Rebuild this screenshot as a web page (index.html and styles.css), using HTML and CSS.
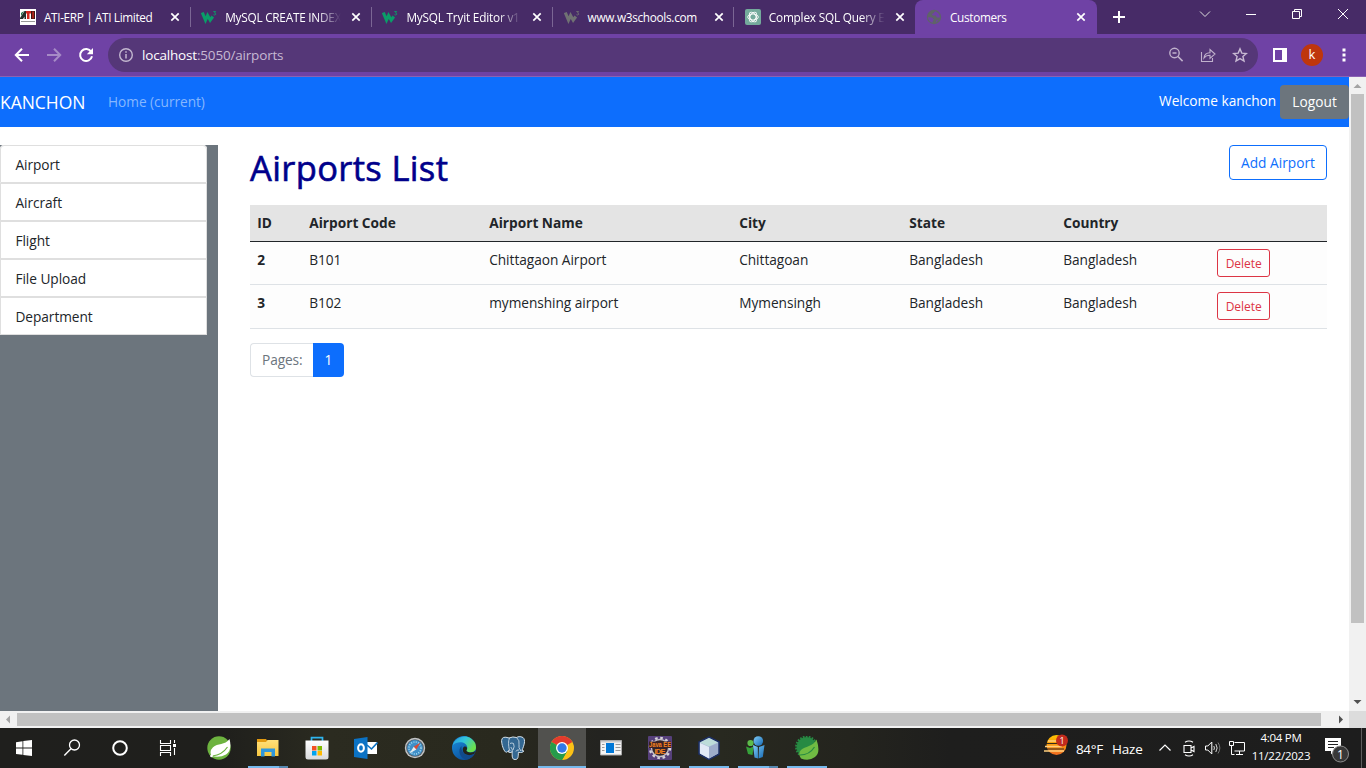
FILE: index.html
```html
<!DOCTYPE html>
<html lang="en">
<head>
<meta charset="utf-8">
<title>Customers</title>
<link rel="stylesheet" href="styles.css">
</head>
<body>
<svg width="0" height="0" class="defs">
  <defs>
    <symbol id="x" viewBox="0 0 10 10"><path d="M1.3 1.3l7.4 7.4M8.7 1.3L1.3 8.7" stroke="#fff" stroke-width="1.7" fill="none"/></symbol>
    <symbol id="w3" viewBox="0 0 16 16"><path d="M1.300 3.500L4.500 11.200 6.600 6.500 9.200 11.200 11.800 7.500" fill="none" stroke="currentColor" stroke-width="3.100"/><path d="M12.300 2.500h2.300l-1.100 1.500q1.500.1 1.200 1.400-.7 1-2.200.3" fill="none" stroke="currentColor" stroke-width=".9"/></symbol>
    <linearGradient id="edgeTop" x1="0" y1="0" x2="1" y2=".5"><stop offset="0" stop-color="#2697df"/><stop offset=".5" stop-color="#32c5dc"/><stop offset="1" stop-color="#6be04e"/></linearGradient>
    <linearGradient id="edgeBot" x1="0" y1="0" x2=".6" y2="1"><stop offset="0" stop-color="#1b8fdf"/><stop offset="1" stop-color="#0c4f9b"/></linearGradient>
    <linearGradient id="sun" x1="0" y1="0" x2="0" y2="1"><stop offset="0" stop-color="#ffc400"/><stop offset="1" stop-color="#f06a21"/></linearGradient>
    <linearGradient id="folder" x1="0" y1="0" x2="0" y2="1"><stop offset="0" stop-color="#ffe07a"/><stop offset="1" stop-color="#f8c740"/></linearGradient>
    <linearGradient id="bag" x1="0" y1="0" x2="0" y2="1"><stop offset="0" stop-color="#fff"/><stop offset="1" stop-color="#d9dadc"/></linearGradient>
    <linearGradient id="person" x1="0" y1="0" x2="1" y2="1"><stop offset="0" stop-color="#7fcdf9"/><stop offset="1" stop-color="#1769b3"/></linearGradient>
  </defs>
</svg>

<div class="tabs">
  <div class="tab">
    <svg class="fav" viewBox="0 0 16 16"><path d="M0 0h16v16H0z" fill="#fff"/><path d="M0 9l4.500-7H6v8H4.500V7.500L3 10H0z" fill="#22302a"/><path d="M1 4l3-2-3 5z" fill="#217346"/><path d="M6 2h5v2.500H9.500V10H7V4.500H6z" fill="#d1281e"/><path d="M11 2h4v8h-4z" fill="#3a1513"/><path d="M12.300 2.500h1.500v7h-1.500z" fill="#c8281e"/><path d="M1 12.500h14" stroke="#999"/></svg>
    <span class="tab-title t1">ATI-ERP | ATI Limited</span><svg class="close"><use href="#x"/></svg>
  </div>
  <div class="tab">
    <svg class="fav green"><use href="#w3"/></svg>
    <span class="tab-title fade t2">MySQL CREATE INDEX</span><svg class="close"><use href="#x"/></svg>
  </div>
  <div class="tab">
    <svg class="fav green"><use href="#w3"/></svg>
    <span class="tab-title fade t3">MySQL Tryit Editor v1</span><svg class="close"><use href="#x"/></svg>
  </div>
  <div class="tab">
    <svg class="fav grey"><use href="#w3"/></svg>
    <span class="tab-title t4">www.w3schools.com</span><svg class="close"><use href="#x"/></svg>
  </div>
  <div class="tab last">
    <svg class="fav" viewBox="0 0 16 16"><rect width="16" height="16" rx="2" fill="#74aa9c"/><g fill="none" stroke="#fff" stroke-width=".9"><ellipse cx="8" cy="8" rx="5.300" ry="3"/><ellipse cx="8" cy="8" rx="5.300" ry="3" transform="rotate(60 8 8)"/><ellipse cx="8" cy="8" rx="5.300" ry="3" transform="rotate(120 8 8)"/></g></svg>
    <span class="tab-title fade t5">Complex SQL Query E</span><svg class="close"><use href="#x"/></svg>
  </div>
  <div class="tab active">
    <svg class="fav" viewBox="0 0 16 16"><circle cx="8" cy="8" r="7.200" fill="#5f6368"/><path d="M2 8.300l4 .2 2 2.200-1.300 1.300v1.800Q2.300 12.500 2 8.300zM9 2.200L7.600 4.200 5.800 5l1 1.600h3l1 2h3.100Q14 3.800 9 2.200zM10 11.500l2.500-.6-2.300 2.500z" fill="#6f42a5"/></svg>
    <span class="tab-title t6">Customers</span><svg class="close"><use href="#x"/></svg>
  </div>
  <svg class="plus" viewBox="0 0 14 14"><path d="M7 1v12M1 7h12" stroke="#fff" stroke-width="2"/></svg>
  <div class="winctl">
    <svg viewBox="0 0 12 12"><path d="M1 3.500l5 5 5-5" fill="none" stroke="#ddd"/></svg>
    <svg viewBox="0 0 12 12"><path d="M1 6.500h10" stroke="#fff"/></svg>
    <svg viewBox="0 0 12 12"><path d="M1.500 3.500h7v7h-7zM3.500 3.500v-2h7v7h-2" fill="none" stroke="#fff"/></svg>
    <svg viewBox="0 0 12 12"><path d="M1 1l10 10M11 1L1 11" stroke="#fff" fill="none"/></svg>
  </div>
</div>

<div class="toolbar">
  <svg class="nav" viewBox="0 0 16 16"><path d="M15 8H2.500M8 1.800L1.800 8 8 14.200" fill="none" stroke="#fff" stroke-width="2"/></svg>
  <svg class="nav" viewBox="0 0 16 16"><path d="M1 8h12.500M8 1.800L14.200 8 8 14.200" fill="none" stroke="#a68bc6" stroke-width="2"/></svg>
  <svg class="nav" viewBox="0 0 16 16"><path d="M13.200 4.800A6 6 0 1 0 14 9.300" fill="none" stroke="#fff" stroke-width="2"/><path d="M15 1v6.200H8.800z" fill="#fff"/></svg>
  <div class="omnibox">
    <svg class="info" viewBox="0 0 16 16"><circle cx="8" cy="8" r="6.300" fill="none" stroke="#c3b7cf" stroke-width="1.400"/><path d="M8 7v4.500M8 4.200v1.600" stroke="#c3b7cf" stroke-width="1.500"/></svg>
    <span class="url"><b>localhost</b>:5050/airports</span>
    <svg class="act" viewBox="0 0 16 16"><circle cx="6.500" cy="6" r="4.700" fill="none" stroke="#c0b1cc" stroke-width="1.400"/><path d="M10 9.500l4.600 4.600M4.500 6h4" stroke="#c0b1cc" stroke-width="1.600"/></svg>
    <svg class="act" viewBox="0 0 16 16"><path d="M1.500 5v9.500h11V11M4 11q.5-5 6-5.200V2.500L15 7l-5 4.300V8.300Q6 8.300 4 11z" fill="none" stroke="#c0b1cc" stroke-width="1.100"/></svg>
    <svg class="act" viewBox="0 0 16 16"><path d="M8 1.900l1.800 4.200 4.600.4-3.500 3 1.100 4.500L8 11.600 4 14l1.100-4.500-3.500-3 4.600-.4z" fill="none" stroke="#c8bad3" stroke-width="1.400"/></svg>
  </div>
  <svg class="panel" viewBox="0 0 14 14"><path d="M1 1h12v12H1z" fill="none" stroke="#fff" stroke-width="2"/><path d="M9 1h4v12H9z" fill="#fff"/></svg>
  <span class="avatar">k</span>
  <svg class="dots" viewBox="0 0 4 14"><path d="M.5 .5h3v3h-3zM.5 5.500h3v3h-3zM.5 10.500h3v3h-3z" fill="#fff"/></svg>
</div>

<div class="content">
  <div class="page">
    <nav class="navbar">
      <span class="brand">KANCHON</span>
      <span class="home">Home (current)</span>
      <span class="welcome">Welcome kanchon</span>
      <span class="logout">Logout</span>
    </nav>
    <div class="columns">
      <aside class="sidebar">
        <ul class="menu">
          <li>Airport</li><li>Aircraft</li><li>Flight</li><li>File Upload</li><li>Department</li>
        </ul>
      </aside>
      <main class="main">
        <div class="heading"><h1>Airports List</h1><span class="add">Add Airport</span></div>
        <table>
          <colgroup><col class="c1"><col class="c2"><col class="c3"><col class="c4"><col class="c5"><col class="c6"><col class="c7"></colgroup>
          <thead><tr><th>ID</th><th>Airport Code</th><th>Airport Name</th><th>City</th><th>State</th><th>Country</th><th></th></tr></thead>
          <tbody>
            <tr><th>2</th><td>B101</td><td>Chittagaon Airport</td><td>Chittagoan</td><td>Bangladesh</td><td>Bangladesh</td><td><span class="delete">Delete</span></td></tr>
            <tr><th>3</th><td>B102</td><td>mymenshing airport</td><td>Mymensingh</td><td>Bangladesh</td><td>Bangladesh</td><td><span class="delete">Delete</span></td></tr>
          </tbody>
        </table>
        <div class="pager"><span class="pages">Pages:</span><span class="current">1</span></div>
      </main>
    </div>
  </div>
  <div class="vscroll">
    <svg viewBox="0 0 17 17"><path d="M4.500 11h8L8.500 7z" fill="#a3a3a3"/></svg>
    <div class="vthumb"></div>
    <svg viewBox="0 0 17 17"><path d="M4.500 6h8l-4 4z" fill="#505050"/></svg>
  </div>
</div>
<div class="hscroll">
  <svg viewBox="0 0 17 17"><path d="M10 4.500v8L6 8.500z" fill="#a3a3a3"/></svg>
  <div class="hthumb"></div>
  <svg viewBox="0 0 17 17"><path d="M7 4.500v8l4-4z" fill="#505050"/></svg>
  <div class="corner"></div>
</div>

<div class="taskbar">
  <div class="sys"><svg viewBox="0 0 24 24"><path d="M4 6.300l6.500-1v6.300H4zM11.300 5.100L20 4v7.600h-8.700zM4 12.400h6.500v6.400L4 17.900zM11.300 12.400H20V20l-8.700-1.100z" fill="#fff"/></svg></div>
  <div class="sys"><svg viewBox="0 0 24 24"><circle cx="14.500" cy="9" r="5" fill="none" stroke="#fff" stroke-width="1.300"/><path d="M11 12.700L4.300 19.600" stroke="#fff" stroke-width="1.400"/></svg></div>
  <div class="sys"><svg viewBox="0 0 24 24"><circle cx="12" cy="12" r="6.800" fill="none" stroke="#fff" stroke-width="2"/></svg></div>
  <div class="sys"><svg viewBox="0 0 24 24"><path d="M4.500 4v3.500h10V4M4.500 20v-3.500h10V20M4.500 9.500h10v5h-10zM18.500 4v3M18.500 12v7" fill="none" stroke="#fff" stroke-width="1.100"/><path d="M17 8h3v3h-3z" fill="#fff"/></svg></div>
  <div class="apps">
    <div class="app"><svg viewBox="0 0 24 24"><circle cx="12" cy="12" r="11.700" fill="#6db33f"/><path d="M22.500 3Q25.500 14 19 18.500q-6 3.500-14.500 1.600Q2 15 6 11.200C10.500 7 18 9.500 22.500 3z" fill="#fff"/><path d="M5.500 20Q15 19 20.500 11" stroke="#6db33f" stroke-width="1.200" fill="none"/><circle cx="4.500" cy="20" r="1.300" fill="#fff"/></svg></div>
    <div class="app open split"><svg viewBox="0 0 24 24"><path d="M1 3h9l1.500 2H22v15H1z" fill="#e29a10"/><path d="M1 6h9l1.500-2H22.500v16H1z" fill="url(#folder)"/><path d="M5 20.500v-8h14v8h-3.500V16h-7v4.500z" fill="#2f97dc"/></svg></div>
    <div class="app"><svg viewBox="0 0 24 24"><path d="M6.500 5V1.700h11V5" fill="none" stroke="#2fb5ee" stroke-width="1.700"/><path d="M.5 4.500h23V21q0 2.500-2.500 2.500H3Q.5 23.500.5 21z" fill="url(#bag)"/><path d="M7 10h4.500v4.500H7z" fill="#f25022"/><path d="M12.500 10H17v4.500h-4.500z" fill="#7fba00"/><path d="M7 15h4.500v4.500H7z" fill="#00a4ef"/><path d="M12.500 15H17v4.500h-4.500z" fill="#ffb900"/></svg></div>
    <div class="app"><svg viewBox="0 0 24 24"><path d="M12 6h11v12H12z" fill="#fff"/><path d="M13 9l4.500 4 6-6.500" stroke="#0b72c4" stroke-width="1.600" fill="none"/><path d="M0 3l13.500-2v22L0 21z" fill="#0b72c4"/><ellipse cx="7" cy="12" rx="2.900" ry="3.700" fill="none" stroke="#fff" stroke-width="2"/></svg></div>
    <div class="app"><svg viewBox="0 0 24 24"><circle cx="12" cy="12" r="10.200" fill="#c2c4c5"/><circle cx="12" cy="12" r="8.800" fill="#555f67"/><circle cx="12" cy="12" r="7.900" fill="#3f8fc8"/><circle cx="12" cy="12" r="6" fill="none" stroke="#a3d7ec" stroke-width="1.600" stroke-dasharray="1 1.360"/><path d="M17.500 6.500l-4.200 7-2.600-2.800z" fill="#d94b35"/><path d="M6.500 17.500l4.200-6.800 2.600 2.800z" fill="#e7edf0"/></svg></div>
    <div class="app"><svg viewBox="0 0 24 24"><circle cx="12" cy="12" r="12" fill="url(#edgeBot)"/><path d="M.5 9.500C3 2 12-2 19 2.500q5 3.500 5 9c0 5-6.500 6-9.500 3.800-1-.8.800-1.300.8-3.300C15.300 5.500 5 4.500.5 9.500z" fill="url(#edgeTop)"/><path d="M9.500 10C5 14 8 23.500 15 23.500q5-1.500 7.500-5.500-5 2.500-9 .5-4.500-2.500-4-8.500z" fill="#114a8b"/><path d="M12.500 10.500c2.500-.3 3.300 2 2 3.800q-.5 1.500 3 2.100 3.500.3 5.700-1.200l-1 2.600q-5 2.500-9 .3c-3-2-3.200-6.500-.7-7.600z" fill="#22231b"/></svg></div>
    <div class="app"><svg viewBox="0 0 24 24"><path d="M8 2Q1-.5 .6 4.500c0 4 2 10 4 11.500 1.500.8 2.500-1 3.500-2.200l1 .5q-1 1.400-2 1.400 2 1.700 4 .2c.2 4-.5 7.600 3 7.600s3-3 3.300-7.200c3 .6 4.500 0 5.500-1.300l-2-.5C23 9.500 25 4 22 1.500 19 0 17 .7 15.500 1.500Q12 .2 8 2z" fill="#336791" stroke="#d7e3ec" stroke-width="1"/><path d="M8.500 2C7 5 7.500 10 8.300 13.700M15.500 1.500q3.500 3 2.500 7-.8 3 1.800 6.500M11.300 16q.5-3-1.500-5M15 15.500q.5-2 3-1.500M9 7.500q2-1 3.500 0 1.500 3-.5 6.500" fill="none" stroke="#d7e3ec" stroke-width=".8"/></svg></div>
    <div class="app chrome open"><svg viewBox="0 0 24 24"><circle cx="12" cy="12" r="12" fill="#fbc116"/><path d="M12 12L1.600 6A12 12 0 0 1 22.400 6z" fill="#e33b2e"/><path d="M1.600 6A12 12 0 0 0 12 24l5.200-9L12 12z" fill="#269b4b"/><path d="M17.200 15L12 24l-2.500-6z" fill="#269b4b"/><circle cx="12" cy="12" r="6" fill="#fff"/><circle cx="12" cy="12" r="4.700" fill="#3379e8"/></svg></div>
    <div class="app"><svg viewBox="0 0 24 24"><path d="M1.500 4.500h21v14.500h-21z" fill="#f4f4f4" stroke="#aaa"/><path d="M2 5h20v1.500H2z" fill="#ccc"/><path d="M7 7h8v10H7z" fill="#0078d7"/><path d="M3 8.500h2.500M3 11.500h2.500M3 14.500h2.500M16.500 8.500h5M16.500 11.500h5M16.500 14.500h5" stroke="#999"/></svg></div>
    <div class="app open"><svg viewBox="0 0 24 24"><rect width="24" height="24" rx="1" fill="#56407b"/><circle cx="12" cy="12" r="10" fill="none" stroke="#d5d2d8" stroke-width="2.500" stroke-dasharray="2.600 2.630"/><circle cx="12" cy="12" r="8.500" fill="#30232b" stroke="#c5c1c8" stroke-width="1.300"/><path d="M1 5.500h22v6.500H1z" fill="#3a2226"/><text x="12" y="11.300" class="jee" textLength="22" lengthAdjust="spacingAndGlyphs">Java EE</text><text x="12" y="18" class="jee big" textLength="11">IDE</text></svg></div>
    <div class="app open"><svg viewBox="0 0 24 24"><path d="M12 1l10 5v12l-10 5.500L2 18V6z" fill="#a8b9d6" stroke="#1d2f65" stroke-width="1.500"/><path d="M12 2l9 4.500-9 4-9-4z" fill="#bddcd9"/><path d="M3 7l9 4v11.500L3 17.500z" fill="#e2e9f6"/><path d="M12 11l9-4v10.500l-9 5z" fill="#9daccb"/></svg></div>
    <div class="app open split"><svg viewBox="0 0 24 24"><circle cx="4.500" cy="7" r="3.100" fill="#5dbb4a"/><path d="M0 10.500l4 1.500 3.500-1.500L6.500 19 2 18z" fill="#36a13a"/><circle cx="12.300" cy="5" r="4.800" fill="url(#person)"/><path d="M7 9l4.800 2 .2 11.500-3.500-1zM18.500 9L13 11l-.5 11.500 4.300-1.500z" fill="url(#person)"/></svg></div>
    <div class="app open"><svg viewBox="0 0 24 24"><circle cx="11.500" cy="11" r="10" fill="#278a43"/><circle cx="11.500" cy="11" r="10.400" fill="none" stroke="#278a43" stroke-width="2" stroke-dasharray="1.700 1.300"/><path d="M21.500 3.500Q26 17 20 21q-6 4.500-14 1.500-3.500-5 0-8.500c4-4 12-3 15.500-10.500z" fill="#70bb43"/><path d="M5 19q9.500 0 14.500-8" fill="none" stroke="#278a43" stroke-width="1.200"/></svg></div>
  </div>
  <div class="tray">
    <svg class="weather" viewBox="0 0 24 24"><circle cx="12.500" cy="11" r="10" fill="url(#sun)"/><path d="M2 9.500h18M0 15h20" stroke="#1f1f1e" stroke-width=".9"/><path d="M4 7h10M1 12.500h17M0 17h20" stroke="#ffcf7d" stroke-width="1.600"/><circle cx="18" cy="6.500" r="6" fill="#c42b1c"/><text x="18" y="9.500" class="badge">1</text></svg>
    <span class="temp">84°F</span><span class="haze">Haze</span>
    <svg class="chev" viewBox="0 0 14 14"><path d="M1.500 9.500L7 4l5.500 5.500" fill="none" stroke="#fff" stroke-width="1.200"/></svg>
    <svg class="meet" viewBox="0 0 14 18"><path d="M2 6.500h7v7H2zM9 9l3-1.500v5L9 11M3 3.300q4-2.600 8 0M3 15.700q4 2.600 8 0" fill="none" stroke="#fff" stroke-width="1.100"/></svg>
    <svg class="snd" viewBox="0 0 18 16"><path d="M1.500 6h2.300l4-4v12l-4-4H1.500z" fill="none" stroke="#fff"/><path d="M9.800 6q1.300 2 0 4M11.800 4q2.700 4 0 8" fill="none" stroke="#ddd"/><path d="M14 2.500q3.700 5.500 0 11" fill="none" stroke="#777"/></svg>
    <svg class="net" viewBox="0 0 18 16"><path d="M6.500 2.500h10v8.500h-10M11.500 11v3M8 14.500h7M1.500 1.500h4v4h-4zM3.500 6v8.500h3" fill="none" stroke="#fff"/></svg>
    <div class="clock"><span class="time">4:04 PM</span><span class="date">11/22/2023</span></div>
    <svg class="note" viewBox="0 0 26 26"><path d="M1 1h16v13h-7l-3 3.500V14H1z" fill="#fff"/><path d="M4 4.500h10M4 7.500h10M4 10.500h6" stroke="#222"/><circle cx="16.500" cy="17" r="8" fill="#383838" stroke="#8d8d8d" stroke-width="1"/><text x="16.500" y="21.500" class="count">1</text></svg>
    <div class="peek"></div>
  </div>
</div>
</body>
</html>
```
FILE: styles.css
```css
* { box-sizing: border-box; }
body { margin: 0; width: 1366px; height: 768px; overflow: hidden; display: flex; flex-direction: column; font-family: "Open Sans", "Noto Sans", sans-serif; background: #fff; white-space: nowrap; }
svg { display: block; flex: none; }
.defs { position: absolute; }

/* tab strip */
.tabs { height: 34px; flex: none; background: #472b67; display: flex; align-items: center; padding-left: 9.500px; }
.tab { width: 181.2px; height: 34px; flex: none; display: flex; align-items: center; padding-left: 10.500px; background: linear-gradient(#7b6694, #7b6694) right center / 1px 20px no-repeat; }
.tab.last { background: none; }
.tab.active { background: #6f42a5; border-radius: 8px 8px 0 0; }
.fav { width: 16px; height: 16px; margin-right: 8px; }
.green { color: #0a9d68; }
.grey { color: #707173; }
.tab-title { color: #fff; font-size: 11.800px; width: 118px; margin-right: 8px; line-height: 20px; }
.t1 { letter-spacing: -.36px; }
.t2 { letter-spacing: -.24px; }
.t3 { letter-spacing: -.2px; }
.t4 { letter-spacing: -.3px; }
.t5 { letter-spacing: -.2px; }
.t6 { letter-spacing: -.32px; }
.fade { -webkit-mask-image: linear-gradient(90deg, #000 92px, transparent 116px); mask-image: linear-gradient(90deg, #000 92px, transparent 116px); }
.close { width: 10px; height: 10px; }
.plus { width: 14px; height: 14px; margin-left: 15.300px; }
.winctl { margin-left: 73px; display: flex; gap: 34px; height: 28px; align-items: center; align-self: flex-start; }
.winctl svg { width: 12px; height: 12px; }

/* toolbar */
.toolbar { height: 43px; flex: none; background: #6f42a5; border-bottom: 1px solid #8a62b3; display: flex; align-items: center; padding-left: 14px; }
.nav { width: 16px; height: 16px; margin-right: 16px; }
.omnibox { width: 1150px; height: 34px; border-radius: 17px; background: #553778; margin-left: -2px; display: flex; align-items: center; padding: 0 10px; gap: 16px; }
.info { width: 16px; height: 16px; }
.url { color: #c6b9d3; font-size: 13.500px; letter-spacing: -.18px; margin-left: -8px; flex: 1; }
.url b { font-weight: 400; color: #fff; }
.act { width: 16px; height: 16px; }
.panel { width: 14px; height: 14px; margin-left: 15px; }
.avatar { width: 22px; height: 22px; border-radius: 50%; background: #bf360c; color: #fff; font-size: 13px; line-height: 21px; text-align: center; margin-left: 14px; }
.dots { width: 4px; height: 14px; margin-left: 19px; }

/* page */
.content { height: 634px; flex: none; display: flex; }
.page { width: 1349px; height: 634px; display: flex; flex-direction: column; font-size: 13.700px; letter-spacing: -.04px; color: #212529; }
.navbar { height: 50px; flex: none; background: #0d6efd; display: flex; align-items: center; color: #fff; }
.brand { font-size: 17.500px; width: 108px; padding-bottom: 1px; }
.home { color: #86b7fe; padding-bottom: 1px; }
.welcome { margin-left: auto; width: 121px; padding-bottom: 3px; letter-spacing: 0; }
.logout { width: 69px; height: 34px; line-height: 34px; background: #6c757d; border-radius: 4px; text-align: center; letter-spacing: .05px; }
.columns { flex: 1; display: flex; padding-top: 18px; }
.sidebar { width: 218px; background: #6c757d; }
.menu { list-style: none; width: 207px; margin: 0; padding: 0; background: #fff; border-radius: 4px 4px 0 0; }
.menu li { height: 38px; border: 1px solid #dfdfdf; padding: 0 14.400px; line-height: 38px; }
.menu li:first-child { border-radius: 4px 4px 0 0; }
.main { width: 1077px; margin-left: 32px; }
.heading { display: flex; justify-content: space-between; height: 60px; }
h1 { margin: 0; font-size: 34.500px; font-weight: 500; letter-spacing: .35px; line-height: 46px; color: #00008b; -webkit-text-stroke: .6px #00008b; }
.add { width: 98px; height: 35px; border: 1px solid #0d6efd; border-radius: 4px; color: #0d6efd; line-height: 34px; text-align: center; letter-spacing: .03px; }
table { width: 1077px; table-layout: fixed; border-collapse: separate; border-spacing: 0; }
.c1 { width: 52px; } .c2 { width: 180px; } .c3 { width: 250px; } .c4 { width: 170px; } .c5 { width: 154px; } .c6 { width: 154px; } .c7 { width: 117px; }
th, td { padding: 7px 0 0 7.200px; text-align: left; vertical-align: top; line-height: 22px; background: #fdfdfd; border-bottom: 1px solid #dee2e6; height: 43px; }
th { font-weight: 700; letter-spacing: 0; }
thead th { background: #e4e4e4; height: 37px; border-bottom-color: #212529; }
tbody tr:last-child > * { height: 44px; }
.delete { display: block; width: 53px; height: 28px; border: 1px solid #dc3545; border-radius: 3px; color: #dc3545; font-size: 12px; line-height: 27px; text-align: center; }
.pager { display: flex; margin-top: 14px; height: 34px; line-height: 33px; }
.pages { width: 63px; border: 1px solid #dee2e6; border-right: 0; border-radius: 4px 0 0 4px; color: #6c757d; padding-left: 11px; line-height: 31px; letter-spacing: -.1px; }
.current { width: 31px; background: #0d6efd; color: #fff; border-radius: 0 4px 4px 0; text-align: center; }

/* scrollbars */
.vscroll { width: 17px; background: #f1f1f1; display: flex; flex-direction: column; align-items: center; }
.vscroll svg, .hscroll svg { width: 17px; height: 17px; }
.vthumb { width: 13px; height: 529px; background: #c1c1c1; margin-bottom: auto; }
.hscroll { height: 17px; flex: none; background: #f1f1f1; display: flex; align-items: center; }
.hthumb { width: 1304px; height: 13px; background: #c1c1c1; margin-right: auto; }
.corner { width: 17px; height: 17px; background: #dcdcdc; }

/* taskbar */
.taskbar { height: 40px; flex: none; display: flex; background: linear-gradient(90deg, #1f1f1d 0, #1f1f1c 220px, #2b2b20 330px, #29291e 500px, #232320 600px, #282920 720px, #24241e 850px, #1e1e1d 950px, #1d1d1d); }
.sys { width: 48px; display: flex; align-items: center; justify-content: center; }
.sys svg, .app svg { width: 24px; height: 24px; }
.apps { display: flex; margin-left: 2px; }
.app { width: 49px; height: 40px; display: flex; align-items: center; justify-content: center; }
.open { background: linear-gradient(#76b9ed, #76b9ed) 5px bottom / 40px 2px no-repeat; }
.split { background: linear-gradient(90deg, #76b9ed 31px, #5688b0 31px) 5px bottom / 40px 2px no-repeat; }
.chrome { background: linear-gradient(#76b9ed, #76b9ed) 1px bottom / 48px 2px no-repeat, linear-gradient(#51514e, #51514e) 1px 0 / 48px 40px no-repeat; }
.jee { font: 700 7px "Liberation Sans", sans-serif; fill: #f58220; text-anchor: middle; }
.jee.big { font-size: 7.500px; }
.tray { margin-left: auto; width: 323px; display: flex; align-items: center; color: #fff; font-size: 13.500px; padding-left: 1px; }
.weather { width: 24px; height: 24px; margin: 0 8px 4px 0; }
.badge { font: 9px "Open Sans", sans-serif; fill: #fff; text-anchor: middle; }
.temp { width: 36px; padding-top: 2px; letter-spacing: -.35px; }
.haze { width: 46px; padding-top: 2px; letter-spacing: -.2px; }
.chev { width: 14px; height: 14px; }
.meet { width: 14px; height: 18px; margin-left: 10px; }
.snd { width: 18px; height: 16px; margin-left: 8px; }
.net { width: 18px; height: 16px; margin-left: 6px; }
.clock { width: 62px; margin-left: 4px; display: flex; flex-direction: column; align-items: center; font-size: 11.500px; letter-spacing: -.25px; line-height: 18px; padding-bottom: 2px; }
.note { width: 26px; height: 26px; margin: 0 0 -4px 12px; }
.count { font: 12px "Open Sans", sans-serif; fill: #fff; text-anchor: middle; }
.peek { width: 1px; height: 40px; background: #5d5d5d; margin-left: auto; margin-right: 4px; }
```
